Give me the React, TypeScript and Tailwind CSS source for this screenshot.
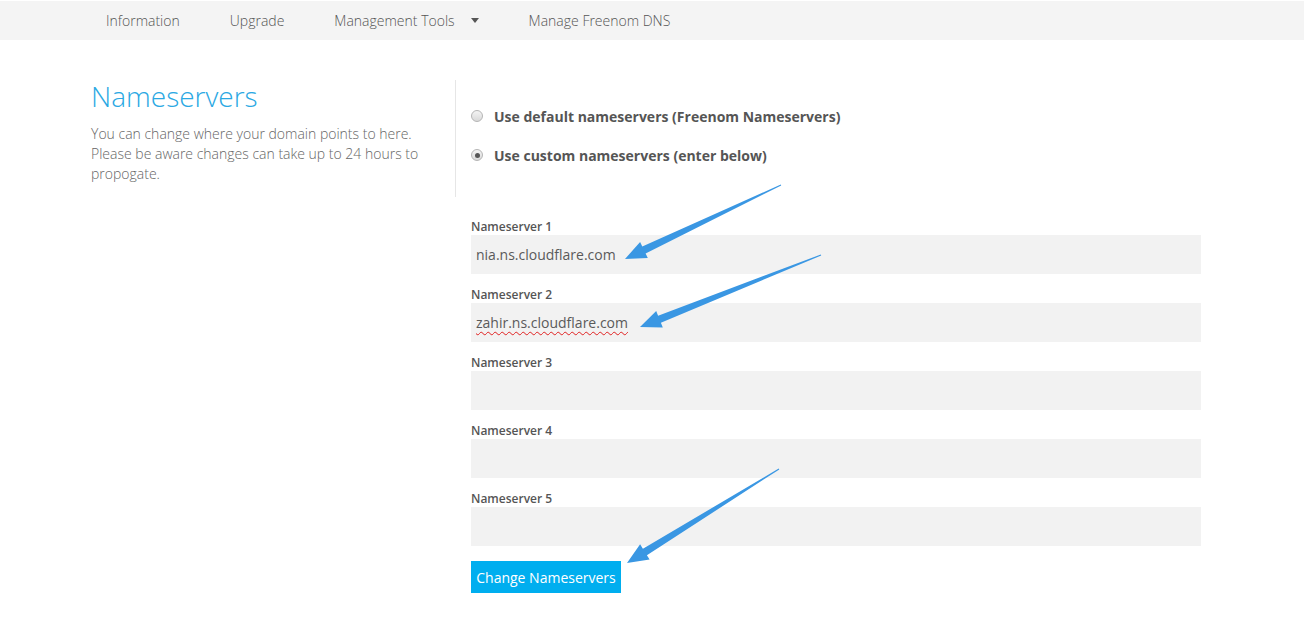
import React from "react";

type Pt = [number, number];

function arrowPoints(tail: Pt, tip: Pt): string {
  const dx = tip[0] - tail[0];
  const dy = tip[1] - tail[1];
  const len = Math.hypot(dx, dy);
  const ux = dx / len;
  const uy = dy / len;
  const nx = -uy;
  const ny = ux;
  const L = 21;
  const bx = tip[0] - ux * L;
  const by = tip[1] - uy * L;
  const p = (x: number, y: number) => `${x.toFixed(1)},${y.toFixed(1)}`;
  return [
    p(tail[0] + nx * 0.5, tail[1] + ny * 0.5),
    p(bx + nx * 3.8, by + ny * 3.8),
    p(bx + nx * 9, by + ny * 9),
    p(tip[0], tip[1]),
    p(bx - nx * 9, by - ny * 9),
    p(bx - nx * 3.8, by - ny * 3.8),
    p(tail[0] - nx * 0.5, tail[1] - ny * 0.5),
  ].join(" ");
}

const arrows: [Pt, Pt][] = [
  [[781, 185], [625, 259]],
  [[821, 255], [640, 327]],
  [[779, 469], [627, 563]],
];

function Radio({ checked, label }: { checked?: boolean; label: string }) {
  return (
    <label className="flex items-center h-5">
      <span className="relative w-[12px] h-[12px] rounded-full border border-[#b5b5b5] bg-gradient-to-b from-[#f4f4f4] to-[#d9d9d9] flex items-center justify-center">
        {checked && <span className="w-[5px] h-[5px] rounded-full bg-[#555]" />}
      </span>
      <span className="ml-[11px] text-[14px] font-bold text-[#555]">{label}</span>
    </label>
  );
}

function Field({ n, value, wavy }: { n: number; value?: string; wavy?: boolean }) {
  return (
    <div className="mb-[12px]">
      <div className="text-[12px] leading-[17px] font-semibold text-[#555]">Nameserver {n}</div>
      <div className="h-[39px] bg-[#f2f2f2] flex items-center pl-[5px] text-[14px] text-[#5a5a5a]">
        {value && (
          <span className={wavy ? "underline decoration-wavy decoration-[#e02020] decoration-1 underline-offset-[3px]" : ""}>
            {value}
          </span>
        )}
      </div>
    </div>
  );
}

export default function App() {
  return (
    <div
      className="relative w-[1304px] h-[628px] bg-white overflow-hidden"
      style={{ fontFamily: '"Open Sans", "Noto Sans", Arial, sans-serif' }}
    >
      <div className="pt-[1px]">
        <nav className="h-[39px] bg-[#f4f4f4] flex items-center pl-[106px] text-[14px] font-light text-[#555]">
          <span>Information</span>
          <span className="ml-[50px]">Upgrade</span>
          <span className="ml-[50px] flex items-center">
            Management Tools
            <svg width="8" height="5" viewBox="0 0 8 5" className="ml-[16px]">
              <path d="M0 0 H8 L4 5 Z" fill="#555" />
            </svg>
          </span>
          <span className="ml-[50px]">Manage Freenom DNS</span>
        </nav>
      </div>

      <main className="flex pt-[40px] pl-[91px]">
        <div className="w-[364px]">
          <h1 className="text-[28px] leading-[34px] font-light text-[#2aa8e3] mt-[-1px]">Nameservers</h1>
          <p className="mt-[11px] text-[14px] leading-[20px] font-light text-[#666] w-[340px]">
            You can change where your domain points to here. Please be aware changes can take up to 24 hours to
            propogate.
          </p>
        </div>
        <div className="w-[746px]">
          <div className="border-l border-[#e6e6e6] h-[117px] pl-[15px] pt-[26px] flex flex-col gap-[19px]">
            <Radio label="Use default nameservers (Freenom Nameservers)" />
            <Radio checked label="Use custom nameservers (enter below)" />
          </div>
          <div className="pl-[16px] pt-[21px] w-[746px]">
            <Field n={1} value="nia.ns.cloudflare.com" />
            <Field n={2} value="zahir.ns.cloudflare.com" wavy />
            <Field n={3} />
            <Field n={4} />
            <Field n={5} />
            <button className="mt-[3px] h-[32px] w-[150px] bg-[#00aeef] text-white text-[14px]">
              Change Nameservers
            </button>
          </div>
        </div>
      </main>

      <svg className="absolute inset-0 pointer-events-none" width="1304" height="628">
        {arrows.map(([t, h], i) => (
          <polygon key={i} points={arrowPoints(t, h)} fill="#3a97e3" />
        ))}
      </svg>
    </div>
  );
}
